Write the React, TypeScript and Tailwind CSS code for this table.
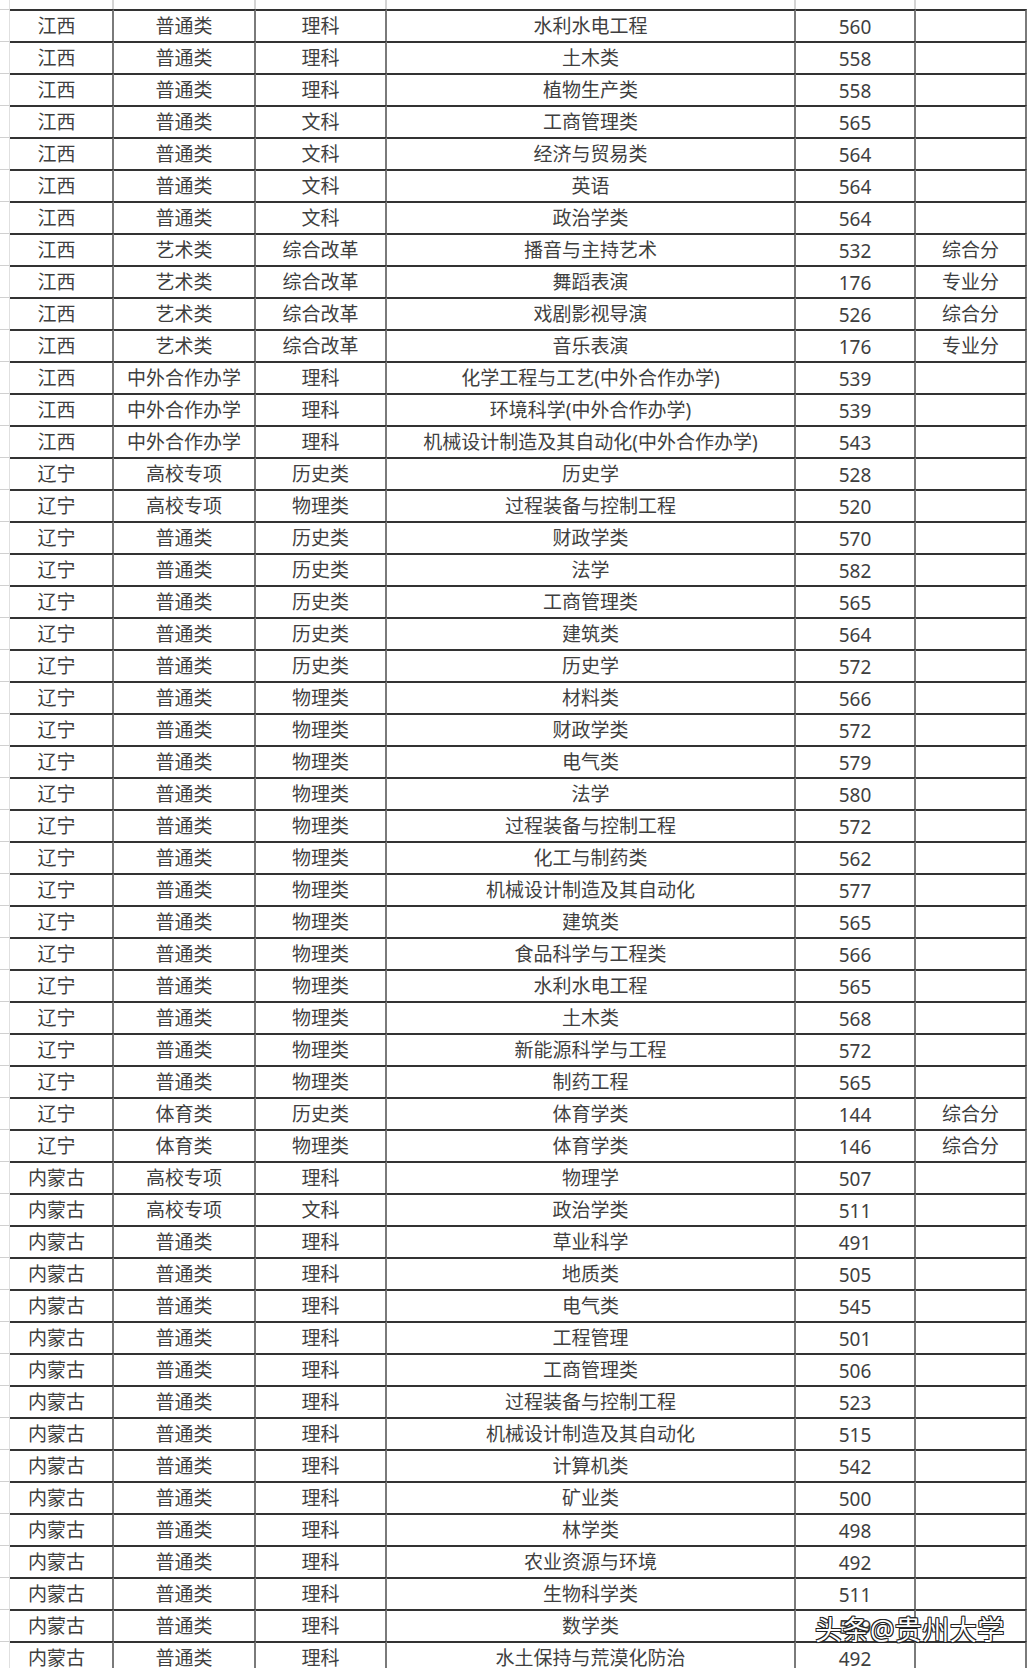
import React from "react";

type Row = [string, string, string, string, string, string?];

const rows: Row[] = [
  ["江西", "普通类", "理科", "水利水电工程", "560"],
  ["江西", "普通类", "理科", "土木类", "558"],
  ["江西", "普通类", "理科", "植物生产类", "558"],
  ["江西", "普通类", "文科", "工商管理类", "565"],
  ["江西", "普通类", "文科", "经济与贸易类", "564"],
  ["江西", "普通类", "文科", "英语", "564"],
  ["江西", "普通类", "文科", "政治学类", "564"],
  ["江西", "艺术类", "综合改革", "播音与主持艺术", "532", "综合分"],
  ["江西", "艺术类", "综合改革", "舞蹈表演", "176", "专业分"],
  ["江西", "艺术类", "综合改革", "戏剧影视导演", "526", "综合分"],
  ["江西", "艺术类", "综合改革", "音乐表演", "176", "专业分"],
  ["江西", "中外合作办学", "理科", "化学工程与工艺(中外合作办学)", "539"],
  ["江西", "中外合作办学", "理科", "环境科学(中外合作办学)", "539"],
  ["江西", "中外合作办学", "理科", "机械设计制造及其自动化(中外合作办学)", "543"],
  ["辽宁", "高校专项", "历史类", "历史学", "528"],
  ["辽宁", "高校专项", "物理类", "过程装备与控制工程", "520"],
  ["辽宁", "普通类", "历史类", "财政学类", "570"],
  ["辽宁", "普通类", "历史类", "法学", "582"],
  ["辽宁", "普通类", "历史类", "工商管理类", "565"],
  ["辽宁", "普通类", "历史类", "建筑类", "564"],
  ["辽宁", "普通类", "历史类", "历史学", "572"],
  ["辽宁", "普通类", "物理类", "材料类", "566"],
  ["辽宁", "普通类", "物理类", "财政学类", "572"],
  ["辽宁", "普通类", "物理类", "电气类", "579"],
  ["辽宁", "普通类", "物理类", "法学", "580"],
  ["辽宁", "普通类", "物理类", "过程装备与控制工程", "572"],
  ["辽宁", "普通类", "物理类", "化工与制药类", "562"],
  ["辽宁", "普通类", "物理类", "机械设计制造及其自动化", "577"],
  ["辽宁", "普通类", "物理类", "建筑类", "565"],
  ["辽宁", "普通类", "物理类", "食品科学与工程类", "566"],
  ["辽宁", "普通类", "物理类", "水利水电工程", "565"],
  ["辽宁", "普通类", "物理类", "土木类", "568"],
  ["辽宁", "普通类", "物理类", "新能源科学与工程", "572"],
  ["辽宁", "普通类", "物理类", "制药工程", "565"],
  ["辽宁", "体育类", "历史类", "体育学类", "144", "综合分"],
  ["辽宁", "体育类", "物理类", "体育学类", "146", "综合分"],
  ["内蒙古", "高校专项", "理科", "物理学", "507"],
  ["内蒙古", "高校专项", "文科", "政治学类", "511"],
  ["内蒙古", "普通类", "理科", "草业科学", "491"],
  ["内蒙古", "普通类", "理科", "地质类", "505"],
  ["内蒙古", "普通类", "理科", "电气类", "545"],
  ["内蒙古", "普通类", "理科", "工程管理", "501"],
  ["内蒙古", "普通类", "理科", "工商管理类", "506"],
  ["内蒙古", "普通类", "理科", "过程装备与控制工程", "523"],
  ["内蒙古", "普通类", "理科", "机械设计制造及其自动化", "515"],
  ["内蒙古", "普通类", "理科", "计算机类", "542"],
  ["内蒙古", "普通类", "理科", "矿业类", "500"],
  ["内蒙古", "普通类", "理科", "林学类", "498"],
  ["内蒙古", "普通类", "理科", "农业资源与环境", "492"],
  ["内蒙古", "普通类", "理科", "生物科学类", "511"],
  ["内蒙古", "普通类", "理科", "数学类", "509"],
  ["内蒙古", "普通类", "理科", "水土保持与荒漠化防治", "492"],
];

const grid = "grid grid-cols-[10px_104px_142px_131px_409px_120px_111px]";
const cell =
  "flex items-center justify-center border-r-2 border-r-[#7a7a7a] border-t-2 border-t-[#333333] whitespace-nowrap";

export default function App() {
  return (
    <div
      className="relative w-[1027px] h-[1668px] overflow-hidden bg-white text-[#3f3f3f]"
      style={{ fontFamily: '"Noto Sans", "Noto Sans CJK SC", sans-serif' }}
    >
      {/* faint strip above the table */}
      <div className={`${grid} h-[9px]`}>
        <div className="border-r border-r-[#e2e2e2]" />
        <div className="border-r-2 border-r-[#d4d4d4]" />
        <div className="border-r-2 border-r-[#d4d4d4]" />
        <div className="border-r-2 border-r-[#d4d4d4]" />
        <div className="border-r-2 border-r-[#d4d4d4]" />
        <div className="border-r-2 border-r-[#d4d4d4]" />
        <div />
      </div>

      {rows.map((r, i) => (
        <div key={i} className={`${grid} h-[32px]`}>
          <div className="border-t border-t-[#d0d0d0] border-r border-r-[#e0e0e0]" />
          <div className={`${cell} pr-[9px] text-[19px]`}>{r[0]}</div>
          <div className={`${cell} text-[19px]`}>{r[1]}</div>
          <div className={`${cell} text-[19px]`}>{r[2]}</div>
          <div className={`${cell} text-[19px]`}>{r[3]}</div>
          <div className={`${cell} pt-[2px] text-[19px]`}>{r[4]}</div>
          <div className={`${cell} border-r-0 text-[19px]`}>{r[5] ?? ""}</div>
        </div>
      ))}

      <div className="absolute left-[815px] top-[1613px] text-[27px] leading-[34px] text-white tracking-[0.5px] [text-shadow:1px_1px_0_#222,-1px_-1px_0_#222,1px_-1px_0_#222,-1px_1px_0_#222,0_1px_0_#222,0_-1px_0_#222]">
        头条@贵州大学
      </div>
    </div>
  );
}
